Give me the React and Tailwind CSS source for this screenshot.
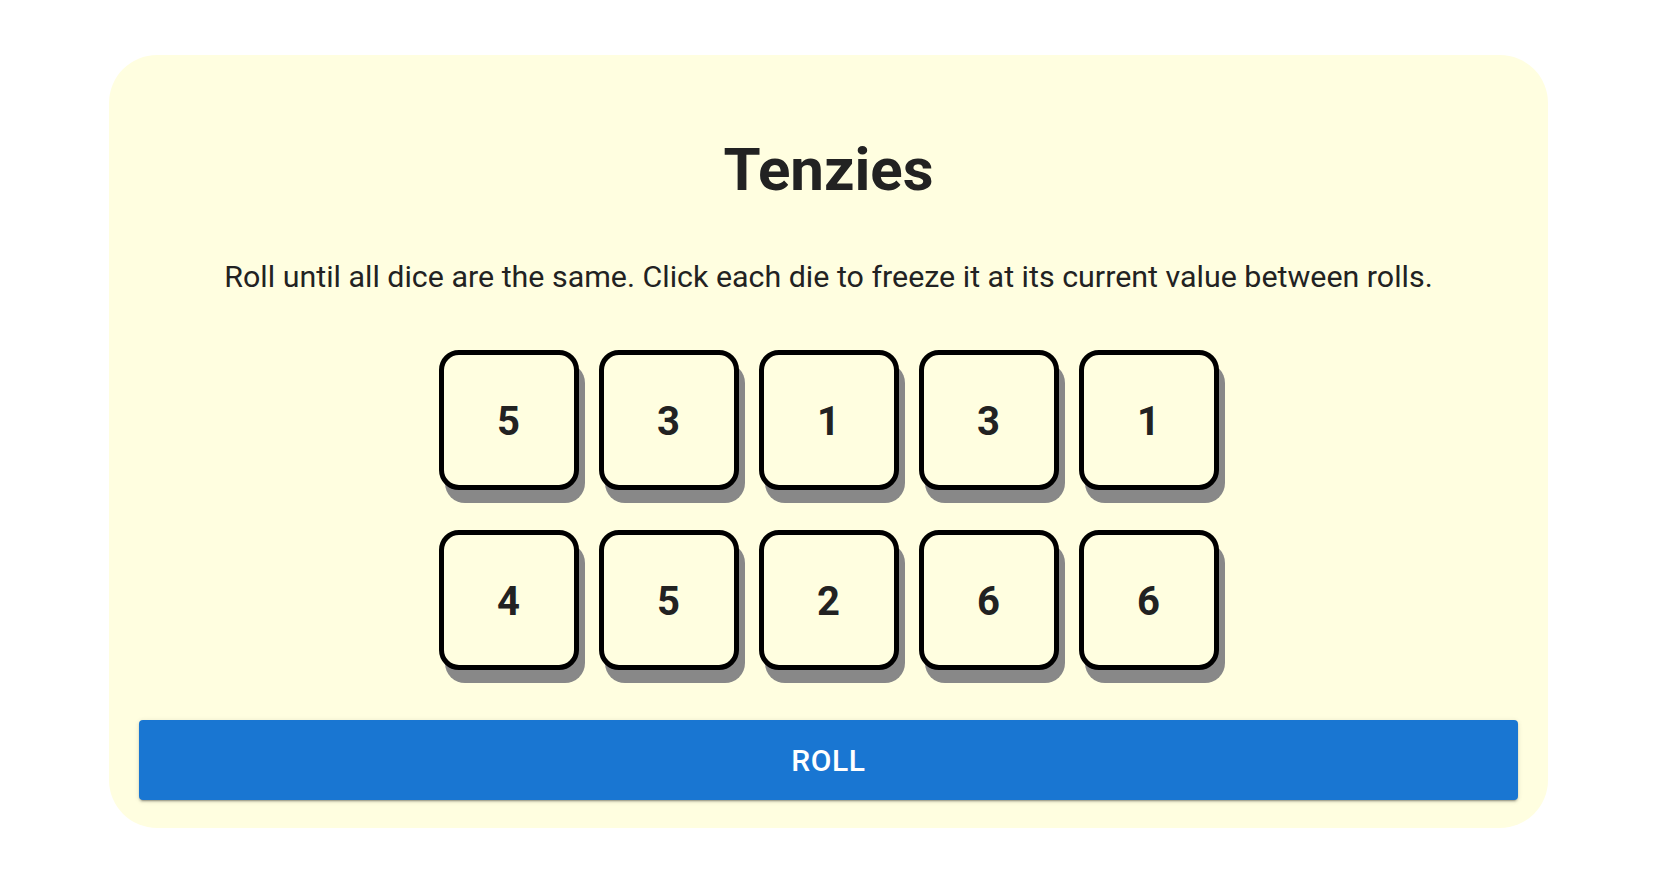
import React from "react";

const dice = [5, 3, 1, 3, 1, 4, 5, 2, 6, 6];

export default function App() {
  return (
    <div className="min-h-screen bg-white pt-[55px] pb-[64px]" style={{ fontFamily: "Roboto, 'Noto Sans', sans-serif" }}>
      <main className="mx-auto w-[1439px] translate-x-[1px] rounded-[48px] bg-[#fffee0] px-[30px] pt-[85px] pb-[28px] text-[#222222]">
        <h1 className="text-center text-[60px] leading-[60px] font-bold">Tenzies</h1>
        <p className="mt-[62px] text-center text-[30.4px] leading-[30px] font-normal">
          Roll until all dice are the same. Click each die to freeze it at its current value between rolls.
        </p>
        <div className="mx-auto mt-[58px] grid w-[780px] grid-cols-5 gap-x-[20px] gap-y-[40px]">
          {dice.map((d, i) => (
            <button
              key={i}
              className="flex h-[140px] w-[140px] items-center justify-center rounded-[20px] border-[5px] border-black bg-[#fffee0] pt-[4px] text-[40px] font-bold text-[#222222] shadow-[6px_13px_0_0_#888888]"
            >
              {d}
            </button>
          ))}
        </div>
        <button className="mt-[50px] flex h-[80px] w-full items-center justify-center rounded-[4px] bg-[#1976d2] text-[30px] font-medium tracking-[0.02em] text-white shadow-[0px_3px_1px_-2px_rgba(0,0,0,0.2),0px_2px_2px_0px_rgba(0,0,0,0.14),0px_1px_5px_0px_rgba(0,0,0,0.12)]">
          ROLL
        </button>
      </main>
    </div>
  );
}
